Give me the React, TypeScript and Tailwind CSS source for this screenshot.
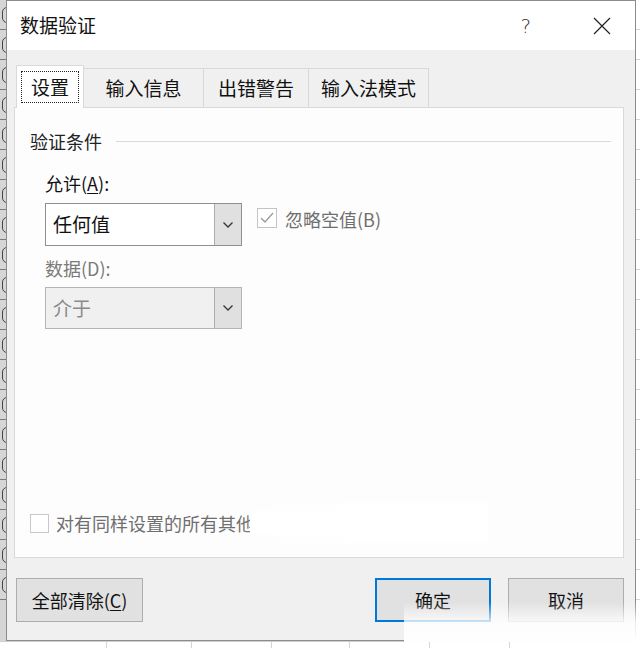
import React from 'react';

const cjk = { fontFamily: '"Microsoft YaHei", "Noto Sans CJK SC", "Noto Sans", sans-serif' };

function Chevron({ color = '#333' }: { color?: string }) {
  return (
    <svg width="12" height="8" viewBox="0 0 12 8" fill="none">
      <path d="M1.5 1.5 L6 6 L10.5 1.5" stroke={color} strokeWidth="1.3" />
    </svg>
  );
}

function Combo({ value, disabled }: { value: string; disabled?: boolean }) {
  return (
    <div
      className={`flex w-[197px] border ${
        disabled ? 'h-[42px] bg-[#f0f0f0] border-[#b4b4b4]' : 'h-[43px] bg-white border-[#8f8f8f]'
      }`}
    >
      <div
        className={`flex-1 flex items-center pl-[7px] text-[19px] ${disabled ? 'text-[#8a8a8a]' : 'text-[#111]'}`}
      >
        {value}
      </div>
      <div className="w-[27px] flex items-center justify-center bg-[#e0e0e0] border-l border-[#adadad]">
        <Chevron />
      </div>
    </div>
  );
}

const tabs = [
  { label: '输入信息', w: 'w-[120px]' },
  { label: '出错警告', w: 'w-[105px]' },
  { label: '输入法模式', w: 'w-[120px]' },
];

export default function App() {
  return (
    <div className="w-[640px] h-[648px] bg-white overflow-hidden flex flex-col" style={cjk}>
      <div className="flex h-[641px]">
        {/* spreadsheet sliver on the left */}
        <div className="w-[6px] flex flex-col bg-[#d6d6d6]">
          {Array.from({ length: 20 }).map((_, i) => (
            <div key={i} className="h-[30px] border-b border-[#7a7a7a] shrink-0 flex items-center justify-end overflow-hidden">
              <div className="w-[10px] h-[16px] border border-[#444] rounded-full -mr-[6px]" />
            </div>
          ))}
        </div>

        {/* dialog */}
        <div className="w-[630px] flex flex-col border border-[#8c8c8c] bg-[#f0f0f0]">
          {/* title bar */}
          <div className="h-[49px] bg-white flex items-center pl-[13px] pr-[24px] shrink-0">
            <span className="text-[19px] text-[#111]">数据验证</span>
            <span className="ml-auto mr-[62px] text-[20px] text-[#333] font-light" style={{ fontFamily: '"DejaVu Sans", sans-serif' }}>
              ?
            </span>
            <svg width="18" height="18" viewBox="0 0 18 18">
              <path d="M1 1 L17 17 M17 1 L1 17" stroke="#222" strokeWidth="1.2" />
            </svg>
          </div>

          {/* body */}
          <div className="flex-1 flex flex-col pl-[7px] pr-[11px]">
            {/* tabs */}
            <div className="flex items-end h-[57px] pl-[2px] relative z-10">
              <div className="w-[68px] h-[43px] bg-white border border-b-0 border-[#d9d9d9] -mb-[1px] flex items-center justify-center px-[4px] py-[5px]">
                <div className="w-full h-full border border-dotted border-[#222] flex items-center justify-center text-[19px] text-[#111]">
                  设置
                </div>
              </div>
              {tabs.map((t) => (
                <div
                  key={t.label}
                  className={`${t.w} h-[39px] bg-[#f0f0f0] border border-b-0 border-l-0 border-[#d9d9d9] flex items-center justify-center text-[19px] text-[#111]`}
                >
                  {t.label}
                </div>
              ))}
            </div>

            {/* panel */}
            <div className="h-[451px] bg-[#fdfdfd] border border-[#d9d9d9] flex flex-col pt-[21px] pl-[15px] pr-[12px] pb-[22px]">
              <div className="h-[24px] flex items-center gap-[14px]">
                <span className="text-[18px] text-[#222]">验证条件</span>
                <div className="flex-1 h-px bg-[#d9d9d9]" />
              </div>

              <div className="pl-[15px] flex flex-col">
                <div className="mt-[18px] h-[24px] flex items-center text-[18px] text-[#111]">
                  允许(<span className="underline underline-offset-2">A</span>):
                </div>
                <div className="mt-[8px] flex items-start">
                  <Combo value="任何值" />
                  <div className="mt-[5px] ml-[15px] w-[20px] h-[20px] border border-[#c4c4c4] bg-white flex items-center justify-center">
                    <svg width="16" height="14" viewBox="0 0 16 14">
                      <path d="M2 7 L6 11 L14 2" fill="none" stroke="#9a9a9a" strokeWidth="1.3" />
                    </svg>
                  </div>
                  <span className="mt-[3px] ml-[8px] text-[18px] text-[#6f6f6f]">忽略空值(B)</span>
                </div>
                <div className="mt-[10px] h-[24px] flex items-center text-[18px] text-[#7a7a7a]">数据(D):</div>
                <div className="mt-[7px]">
                  <Combo value="介于" disabled />
                </div>
              </div>

              <div className="mt-auto h-[24px] flex items-center relative">
                <div className="w-[19px] h-[19px] border border-[#c8c8c8] bg-white" />
                <span className="ml-[7px] text-[18px] text-[#6f6f6f] whitespace-nowrap">对有同样设置的所有其他单元格应用这些更改</span>
                <div className="absolute left-[208px] top-[-8px] w-[250px] h-[40px] bg-gradient-to-r from-white/0 via-white to-white" />
                <div className="absolute left-[220px] top-0 w-[238px] h-[24px] bg-white" />
              </div>
            </div>

            {/* buttons */}
            <div className="flex mt-[20px] pl-[2px] relative">
              <button className="w-[127px] h-[44px] bg-[#e1e1e1] border border-[#adadad] text-[18px] text-[#111]">
                全部清除(<span className="underline underline-offset-2">C</span>)
              </button>
              <button className="ml-auto w-[116px] h-[44px] bg-[#e1e1e1] border-2 border-[#0078d7] text-[18px] text-[#111]">
                确定
              </button>
              <button className="ml-[17px] w-[116px] h-[44px] bg-[#e1e1e1] border border-[#adadad] text-[18px] text-[#111]">
                取消
              </button>
              {/* watermark smear */}
              <div className="absolute left-[390px] top-[24px] w-[240px] h-[40px] bg-gradient-to-b from-white/0 via-white/80 to-white" />
            </div>
          </div>
        </div>

        {/* spreadsheet sliver on the right */}
        <div className="flex-1 flex flex-col bg-white">
          {Array.from({ length: 20 }).map((_, i) => (
            <div key={i} className="h-[30px] border-b border-[#d4d4d4] shrink-0" />
          ))}
        </div>
      </div>

      {/* spreadsheet strip at the bottom */}
      <div className="flex-1 flex border-t border-[#cfcfcf] bg-white">
        <div className="w-[107px] border-r border-[#d4d4d4]" />
        <div className="w-[85px] border-r border-[#d4d4d4]" />
        <div className="w-[80px] border-r border-[#d4d4d4]" />
        <div className="w-[78px] border-r border-[#d4d4d4]" />
        <div className="w-[80px] border-r border-[#d4d4d4]" />
        <div className="w-[80px] border-r border-[#d4d4d4]" />
      </div>
    </div>
  );
}
